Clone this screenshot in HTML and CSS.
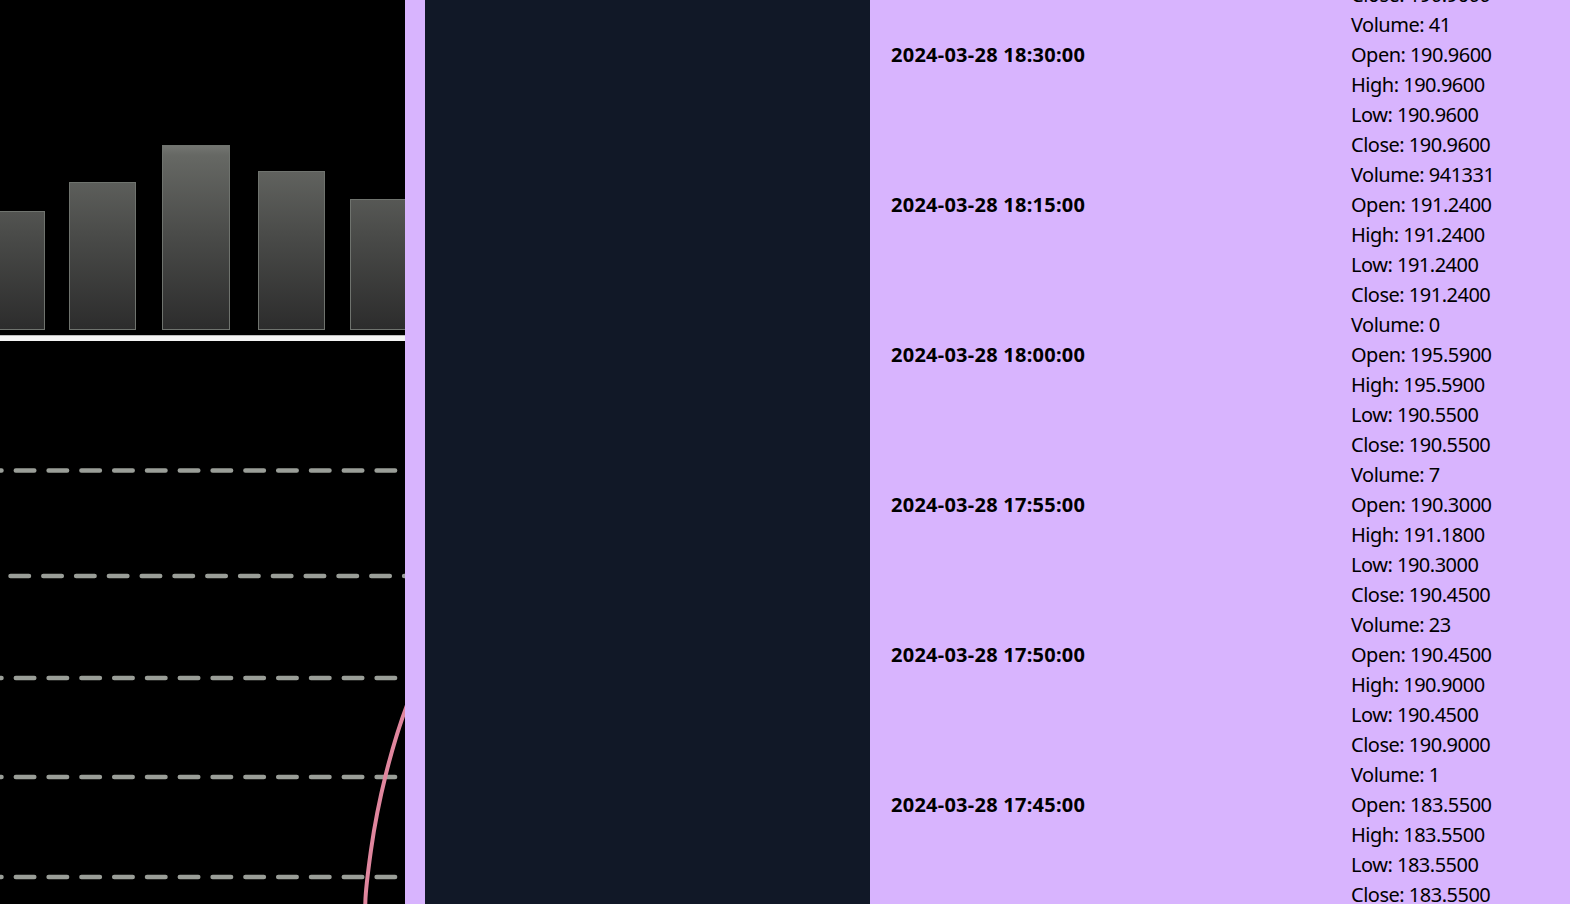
FILE: index.html
```html
<!DOCTYPE html>
<html lang="en">
<head>
<meta charset="utf-8">
<title>Chart</title>
<link rel="stylesheet" href="styles.css">
</head>
<body>
<div class="layout">
  <section class="chart">
    <svg class="chart-svg" width="405" height="904" viewBox="0 0 405 904">
      <defs>
        <linearGradient id="barfill" gradientUnits="userSpaceOnUse" x1="0" y1="140" x2="0" y2="330">
          <stop offset="0" stop-color="#7b7d79"/>
          <stop offset="0.08" stop-color="#666864"/>
          <stop offset="0.5" stop-color="#4a4b49"/>
          <stop offset="1" stop-color="#2c2c2c"/>
        </linearGradient>
      </defs>
      <rect width="405" height="904" fill="#000"/>
      <g fill="url(#barfill)" stroke="#6f736e" stroke-width="1">
        <rect x="-2" y="211.5" width="46.5" height="118"/>
        <rect x="69.5" y="182.5" width="66" height="147"/>
        <rect x="162.5" y="145.5" width="67" height="184"/>
        <rect x="258.5" y="171.5" width="66" height="158"/>
        <rect x="350.5" y="199.5" width="70" height="130"/>
      </g>
      <rect x="0" y="335" width="405" height="6" fill="#f4f4f4"/>
      <rect x="0" y="335" width="405" height="1" fill="#bdbdbd"/>
      <g stroke="#9a9e98" stroke-width="4.5" stroke-linecap="round" stroke-dasharray="18.5 14.3">
        <line x1="-17" y1="470.5" x2="396" y2="470.5"/>
        <line x1="10.5" y1="576" x2="420" y2="576"/>
        <line x1="-17" y1="678" x2="396" y2="678"/>
        <line x1="-17" y1="777" x2="396" y2="777"/>
        <line x1="-17" y1="877" x2="396" y2="877"/>
      </g>
      <path d="M407 705 C392 745, 378 800, 371 850 S366 895, 365 910" fill="none" stroke="#e0869e" stroke-width="4"/>
    </svg>
  </section>
  <div class="gutter"></div>
  <section class="navy"></section>
  <section class="data">
    <div class="rows">
      <div class="row">
        <div class="date">2024-03-28 18:45:00</div>
        <div class="vals">
          <div>Open: 190.9600</div>
          <div>High: 190.9600</div>
          <div>Low: 190.9600</div>
          <div>Close: 190.9600</div>
          <div>Volume: 41</div>
        </div>
      </div>
      <div class="row">
        <div class="date">2024-03-28 18:30:00</div>
        <div class="vals">
          <div>Open: 190.9600</div>
          <div>High: 190.9600</div>
          <div>Low: 190.9600</div>
          <div>Close: 190.9600</div>
          <div>Volume: 941331</div>
        </div>
      </div>
      <div class="row">
        <div class="date">2024-03-28 18:15:00</div>
        <div class="vals">
          <div>Open: 191.2400</div>
          <div>High: 191.2400</div>
          <div>Low: 191.2400</div>
          <div>Close: 191.2400</div>
          <div>Volume: 0</div>
        </div>
      </div>
      <div class="row">
        <div class="date">2024-03-28 18:00:00</div>
        <div class="vals">
          <div>Open: 195.5900</div>
          <div>High: 195.5900</div>
          <div>Low: 190.5500</div>
          <div>Close: 190.5500</div>
          <div>Volume: 7</div>
        </div>
      </div>
      <div class="row">
        <div class="date">2024-03-28 17:55:00</div>
        <div class="vals">
          <div>Open: 190.3000</div>
          <div>High: 191.1800</div>
          <div>Low: 190.3000</div>
          <div>Close: 190.4500</div>
          <div>Volume: 23</div>
        </div>
      </div>
      <div class="row">
        <div class="date">2024-03-28 17:50:00</div>
        <div class="vals">
          <div>Open: 190.4500</div>
          <div>High: 190.9000</div>
          <div>Low: 190.4500</div>
          <div>Close: 190.9000</div>
          <div>Volume: 1</div>
        </div>
      </div>
      <div class="row">
        <div class="date">2024-03-28 17:45:00</div>
        <div class="vals">
          <div>Open: 183.5500</div>
          <div>High: 183.5500</div>
          <div>Low: 183.5500</div>
          <div>Close: 183.5500</div>
          <div>Volume: 1</div>
        </div>
      </div>
    </div>
  </section>
</div>
</body>
</html>
```

FILE: styles.css
```css
html, body {
  margin: 0;
  padding: 0;
  height: 100%;
  overflow: hidden;
  background: #d8b4fe;
}

.layout {
  display: grid;
  grid-template-columns: 405px 20px 445px 1fr;
  height: 904px;
}

.chart {
  background: #000;
  overflow: hidden;
}

.chart-svg {
  display: block;
}

.gutter {
  background: #d8b4fe;
}

.navy {
  background: #111827;
}

.data {
  background: #d8b4fe;
  overflow: hidden;
  font-family: "Noto Sans", "Open Sans", sans-serif;
  font-size: 20px;
  line-height: 30px;
  color: #000;
}

.rows {
  margin-top: -110px;
  padding: 0 20px 0 21px;
}

.row {
  display: grid;
  grid-template-columns: 460px 1fr;
}

.date {
  font-weight: 700;
  letter-spacing: 0.25px;
}

.vals {
  letter-spacing: -0.5px;
}
```
